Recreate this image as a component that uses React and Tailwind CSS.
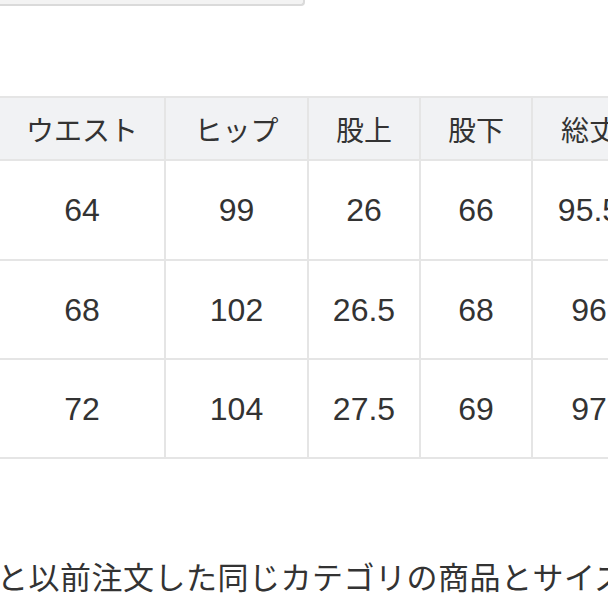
import React from 'react';

const headers = ['ウエスト', 'ヒップ', '股上', '股下', '総丈'];

const rows = [
    ['64', '99', '26', '66', '95.5'],
    ['68', '102', '26.5', '68', '96'],
    ['72', '104', '27.5', '69', '97'],
];

const rowHeights = ['h-[98px]', 'h-[97px]', 'h-[97px]'];

const App = () => {
    return (
        <div className="w-[608px] h-[608px] overflow-hidden bg-white text-[#333333] font-['Noto_Sans_CJK_JP',sans-serif]">
            {/* bottom edge of the box above */}
            <div className="w-[305px] h-[6px] bg-[#f3f3f3] border-r-2 border-b-2 border-[#dadada] rounded-br-sm" />

            {/* size table */}
            <div className="mt-[90px] -ml-[2px] w-[650px] grid grid-cols-[164px_141px_110px_110px_112px] gap-[2px] p-[2px] bg-[#e5e5e5]">
                {headers.map((h) => (
                    <div
                        key={h}
                        className="h-[61px] bg-[#f1f2f4] flex items-center justify-center text-[28px] leading-none"
                    >
                        {h}
                    </div>
                ))}
                {rows.map((row, i) =>
                    row.map((v, j) => (
                        <div
                            key={`${i}-${j}`}
                            className={`${rowHeights[i]} bg-white flex items-center justify-center text-[32px] leading-none font-['Liberation_Sans',sans-serif]`}
                        >
                            {v}
                        </div>
                    ))
                )}
            </div>

            {/* note text */}
            <p className="mt-[97px] -ml-[3px] whitespace-nowrap text-[31px] leading-[40px] tracking-[0.5px]">
                と以前注文した同じカテゴリの商品とサイズ
            </p>
        </div>
    );
};

export default App;
